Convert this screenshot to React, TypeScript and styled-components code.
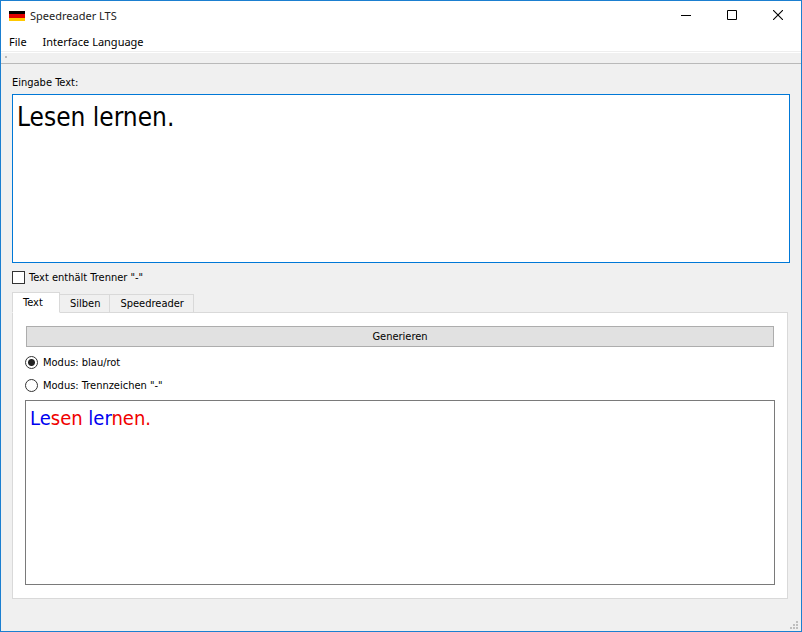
import React, { useState } from "react";
import styled, { createGlobalStyle } from "styled-components";

const chromeFont = `"Noto Sans", "Open Sans", sans-serif`;
const contentFont = `"DejaVu Sans Condensed", "DejaVu Sans", sans-serif`;

const GlobalStyle = createGlobalStyle`
  * { box-sizing: border-box; }
  body { margin: 0; font-family: ${contentFont}; font-size: 11px; line-height: 16px; color: #000; }
  button, textarea, input { font: inherit; color: inherit; margin: 0; }
`;

const Window = styled.div`
  display: flex;
  flex-direction: column;
  min-height: 100vh;
  background: #f0f0f0;
  border: 1px solid #1b7fd0;
`;

const TitleBar = styled.header`
  display: flex;
  align-items: center;
  height: 29px;
  padding-left: 8px;
  background: #fff;
  font-family: ${chromeFont};
`;

const Title = styled.h1`
  flex: 1;
  margin: 0 0 0 5px;
  font-size: 11px;
  font-weight: 400;
  color: #222;
`;

const CaptionButton = styled.button`
  display: grid;
  place-items: center;
  width: 46px;
  height: 29px;
  padding: 0 0 1px;
  border: 0;
  background: none;
`;

const MenuBar = styled.nav`
  display: flex;
  align-items: flex-end;
  gap: 16px;
  height: 21px;
  padding-left: 8px;
  background: #fff;
  font-family: ${chromeFont};
`;

const MenuItem = styled.button`
  padding: 0;
  border: 0;
  background: none;
  font-size: 11px;
  line-height: 18px;
`;

const ToolStrip = styled.div`
  height: 13px;
  padding: 4px 0 0 4px;
  border-top: 1px solid #eee;
  border-bottom: 1px solid #b9b9b9;
  box-shadow: inset 0 1px 0 #fff;
`;

const Grip = styled.div`
  width: 2px;
  height: 2px;
  background: #b8b8b8;
`;

const Main = styled.main`
  display: flex;
  flex: 1;
  flex-direction: column;
  padding: 11px 11px 0;
`;

const FieldLabel = styled.label`
  height: 19px;
`;

const InputText = styled.textarea`
  display: block;
  width: 100%;
  height: 169px;
  padding: 3px 4px;
  border: 1px solid #0078d7;
  outline: 0;
  resize: none;
  background: #fff;
  font-size: 26px;
  line-height: 38px;
`;

const Option = styled.label`
  display: flex;
  align-items: center;
  gap: 5px;
  height: 23px;
  line-height: 18px;
`;

const SeparatorOption = styled(Option)`
  gap: 4px;
  height: 29px;
`;

const CheckBox = styled.input`
  appearance: none;
  width: 13px;
  height: 13px;
  border: 1px solid #333;
  background: #fff;
  &:checked { box-shadow: inset 0 0 0 2px #fff; background: #333; }
`;

const Radio = styled.input`
  appearance: none;
  width: 13px;
  height: 13px;
  border: 1px solid #333;
  border-radius: 50%;
  background: #fff;
  &:checked { background: radial-gradient(circle, #222 3px, #fff 4px); }
`;

const TabList = styled.div`
  display: flex;
  align-items: flex-end;
  height: 21px;
  margin-bottom: -1px;
  z-index: 1;
`;

const Tab = styled.button<{ $active: boolean }>`
  min-width: 48px;
  height: ${(p) => (p.$active ? 21 : 19)}px;
  padding: 1px 9px 0 10px;
  border: 1px solid #d9d9d9;
  border-bottom-color: ${(p) => (p.$active ? "#fff" : "#d9d9d9")};
  background: ${(p) => (p.$active ? "#fff" : "#f0f0f0")};
  line-height: 16px;
  text-align: left;
  & + & { border-left: 0; }
`;

const Panel = styled.section`
  display: flex;
  flex: 1;
  flex-direction: column;
  margin: 0 2px 32px 0;
  padding: 13px 12px;
  border: 1px solid #d9d9d9;
  background: #fff;
`;

const GenerateButton = styled.button`
  height: 21px;
  margin: 0 1px 4px;
  padding: 1px 0 0;
  border: 1px solid #adadad;
  background: #e1e1e1;
  line-height: 18px;
`;

const Output = styled.div`
  flex: 1;
  margin-top: 3px;
  padding: 3px 4px;
  border: 1px solid #7a7a7a;
  outline: 0;
  font-size: 20px;
  line-height: 28px;
`;

const Syllable = styled.span<{ $tone: "blue" | "red" }>`
  color: ${(p) => (p.$tone === "blue" ? "#0000f0" : "#f00000")};
`;

const SizeGrip = styled.svg`
  position: absolute;
  right: 4px;
  bottom: 3px;
`;

const tabs = ["Text", "Silben", "Speedreader"];
const words: [string, string][] = [["Le", "sen"], ["ler", "nen."]];

export default function App() {
  const [tab, setTab] = useState("Text");
  const [mode, setMode] = useState("color");
  return (
    <Window>
      <GlobalStyle />
      <TitleBar>
        <svg width="16" height="10" shapeRendering="crispEdges" aria-hidden="true">
          <path fill="#000" d="M0 0h16v3H0z" />
          <path fill="#e00000" d="M0 3h16v4H0z" />
          <path fill="#ffc800" d="M0 7h16v3H0z" />
        </svg>
        <Title>Speedreader LTS</Title>
        <CaptionButton aria-label="Minimize">
          <svg width="10" height="10" shapeRendering="crispEdges"><path fill="#000" d="M0 5h10v1H0z" /></svg>
        </CaptionButton>
        <CaptionButton aria-label="Maximize">
          <svg width="10" height="10"><path fill="none" stroke="#000" d="M.5.5h9v9h-9z" /></svg>
        </CaptionButton>
        <CaptionButton aria-label="Close">
          <svg width="10" height="10"><path stroke="#000" strokeWidth="1.1" d="M0 0l10 10M10 0L0 10" /></svg>
        </CaptionButton>
      </TitleBar>
      <MenuBar>
        <MenuItem>File</MenuItem>
        <MenuItem>Interface Language</MenuItem>
      </MenuBar>
      <ToolStrip><Grip /></ToolStrip>
      <Main>
        <FieldLabel htmlFor="source">Eingabe Text:</FieldLabel>
        <InputText id="source" spellCheck={false} defaultValue="Lesen lernen." />
        <SeparatorOption>
          <CheckBox type="checkbox" />
          Text enthält Trenner "-"
        </SeparatorOption>
        <TabList role="tablist">
          {tabs.map((name) => (
            <Tab key={name} role="tab" aria-selected={tab === name} $active={tab === name} onClick={() => setTab(name)}>
              {name}
            </Tab>
          ))}
        </TabList>
        <Panel role="tabpanel">
          <GenerateButton>Generieren</GenerateButton>
          <Option>
            <Radio type="radio" name="mode" checked={mode === "color"} onChange={() => setMode("color")} />
            Modus: blau/rot
          </Option>
          <Option>
            <Radio type="radio" name="mode" checked={mode === "dash"} onChange={() => setMode("dash")} />
            Modus: Trennzeichen "-"
          </Option>
          <Output role="textbox" aria-label="Ausgabe" tabIndex={0}>
            {words.map(([first, second], i) => (
              <React.Fragment key={first}>
                {i > 0 && " "}
                <Syllable $tone="blue">{first}</Syllable>
                <Syllable $tone="red">{second}</Syllable>
              </React.Fragment>
            ))}
          </Output>
        </Panel>
      </Main>
      <SizeGrip width="8" height="8" fill="#bfbfbf" shapeRendering="crispEdges" aria-hidden="true">
        <path d="M6 0h2v2H6zM3 3h2v2H3zM6 3h2v2H6zM0 6h2v2H0zM3 6h2v2H3zM6 6h2v2H6z" />
      </SizeGrip>
    </Window>
  );
}
